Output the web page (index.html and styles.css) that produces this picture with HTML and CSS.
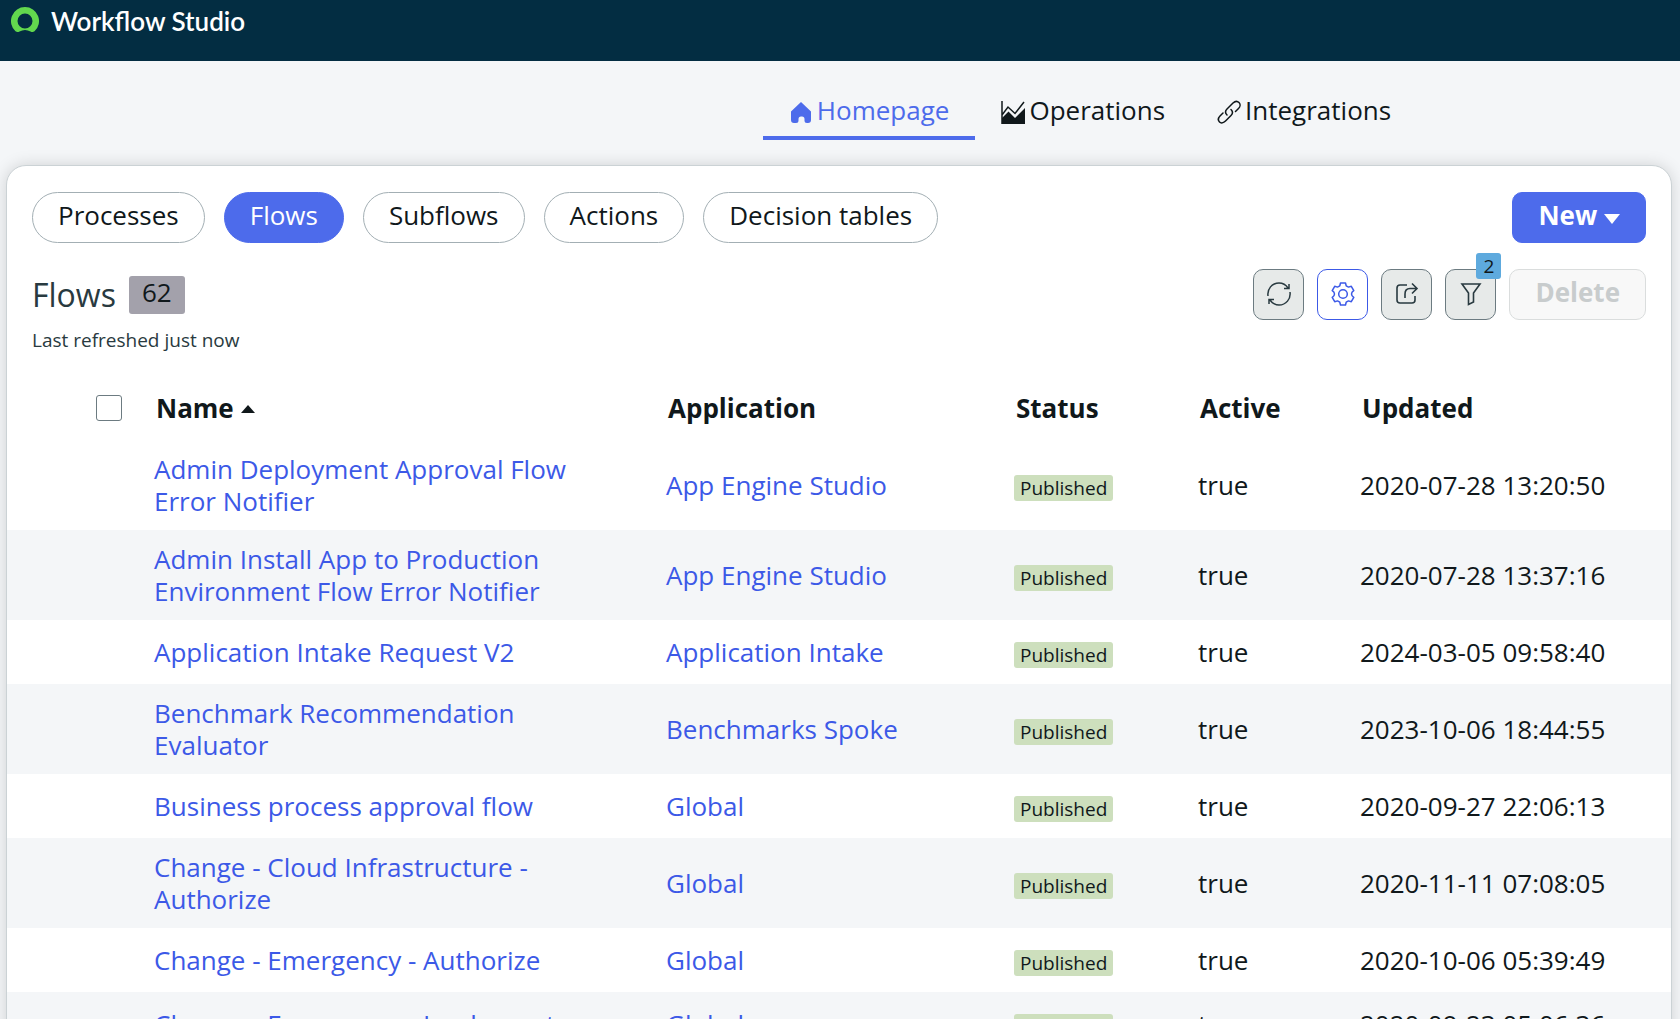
FILE: index.html
```html
<!DOCTYPE html>
<html lang="en">
<head>
  <meta charset="UTF-8" />
  <meta name="viewport" content="width=device-width, initial-scale=1" />
  <title>Workflow Studio</title>
  <link rel="stylesheet" href="styles.css">
</head>
<body>
  <header class="topbar">
    <svg class="logo" viewBox="0 0 28 26" aria-hidden="true">
      <path fill="#62d84e" fill-rule="evenodd" d="M14 0A14 14 0 0 0 4.500 24.300C5.700 25.400 7.300 25.300 8.500 24.500Q14 21.500 19.500 24.500C20.700 25.300 22.300 25.400 23.500 24.300A14 14 0 0 0 14 0ZM14 21.500A7.500 7.500 0 1 1 14 6.500A7.500 7.500 0 0 1 14 21.500Z"/>
    </svg>
    <span class="brand">Workflow Studio</span>
  </header>

  <nav class="tabs">
    <a class="tab active" href="#">
      <svg width="24" height="24" viewBox="0 0 24 24" aria-hidden="true">
        <path fill="currentColor" d="M12 2L22 11.500V20Q22 23 19 23H18Q15.500 23 15.500 20.500V19Q15.500 16.500 13 16.500H12Q9.500 16.500 9.500 19V20.500Q9.500 23 7 23H5Q2 23 2 20V11.500Z"/>
      </svg>
      <span>Homepage</span>
    </a>
    <a class="tab" href="#">
      <svg width="24" height="24" viewBox="0 0 24 24" aria-hidden="true">
        <path fill="currentColor" d="M1 18L7.500 11.500L14 18L24 8V24H1Z"/>
        <path fill="none" stroke="currentColor" stroke-width="1.500" d="M1 1V24M1 15L7 7L14 13.500L23 2"/>
      </svg>
      <span>Operations</span>
    </a>
    <a class="tab" href="#">
      <svg width="24" height="24" viewBox="0 0 24 24" aria-hidden="true">
        <g fill="none" stroke="currentColor" stroke-width="1.500" stroke-linecap="round">
          <path d="M10 15C8 13 8.500 10.500 10 9L16 3C18 1 20.500 1 22 2.500C23.500 4 23.500 6.500 21.500 8.500L18.500 11.500"/>
          <path d="M14 9.500C16 11.500 15.500 14 14 15.500L8.500 21C6.500 23 4 23.500 2.500 22C1 20.500 1 18 3 16L6 13"/>
        </g>
      </svg>
      <span>Integrations</span>
    </a>
  </nav>

  <main class="card">
    <div class="toolbar">
      <div class="pills">
        <button class="pill">Processes</button>
        <button class="pill selected">Flows</button>
        <button class="pill">Subflows</button>
        <button class="pill">Actions</button>
        <button class="pill">Decision tables</button>
      </div>
      <button class="btn primary">New
        <svg width="16" height="10" viewBox="0 0 16 10" aria-hidden="true"><path fill="currentColor" d="M0 0H16L8 10Z"/></svg>
      </button>
    </div>

    <div class="list-head">
      <div>
        <div class="list-title">
          <h1>Flows</h1>
          <span class="count">62</span>
        </div>
        <p class="refreshed">Last refreshed just now</p>
      </div>
      <div class="actions">
        <button class="icon-btn" aria-label="Refresh">
          <svg width="24" height="24" viewBox="0 0 24 24" aria-hidden="true">
            <g fill="none" stroke="currentColor" stroke-width="1.500">
              <path d="M1 14C0 7 5 1 12 1C16 1 19 3 21 6M22 2V6.500H17"/>
              <path d="M23 10C24 17 19 23 12 23C8 23 5 21 3 18M2 22V17.500H7"/>
            </g>
          </svg>
        </button>
        <button class="icon-btn outlined" aria-label="Settings">
          <svg width="24" height="24" viewBox="0 0 24 24" aria-hidden="true">
            <g fill="none" stroke="currentColor" stroke-width="1.500" stroke-linejoin="round">
              <path d="M9.500 1H14.500L15.200 3.800L17.500 5.100L20.300 4.300L22.800 8.600Q20.500 10 20.500 12Q20.500 14 22.800 15.400L20.300 19.700L17.500 18.900L15.200 20.200L14.500 23H9.500L8.800 20.200L6.500 18.900L3.700 19.700L1.200 15.400Q3.500 14 3.500 12Q3.500 10 1.200 8.600L3.700 4.300L6.500 5.100L8.800 3.800Z"/>
              <circle cx="12" cy="12" r="4.300"/>
            </g>
          </svg>
        </button>
        <button class="icon-btn" aria-label="Share">
          <svg width="24" height="24" viewBox="0 0 24 24" aria-hidden="true">
            <g fill="none" stroke="currentColor" stroke-width="1.600">
              <path d="M12 3H5Q2 3 2 6V18Q2 21 5 21H17Q20 21 20 18V14"/>
              <path d="M10 16V12Q10 6.500 15 6.500H22M17 1.500L22 6.500L17 11.500"/>
            </g>
          </svg>
        </button>
        <div class="filter">
          <button class="icon-btn" aria-label="Filter">
            <svg width="24" height="24" viewBox="0 0 24 24" aria-hidden="true">
              <path fill="none" stroke="currentColor" stroke-width="1.600" d="M3 2H21L14.500 11V20L9.500 22.500V11Z"/>
            </svg>
          </button>
          <span class="badge">2</span>
        </div>
        <button class="btn" disabled>Delete</button>
      </div>
    </div>

    <table class="flows">
      <colgroup>
        <col class="col-check"><col class="col-name"><col class="col-app"><col class="col-status"><col class="col-active"><col>
      </colgroup>
      <thead>
        <tr>
          <th class="check"><input type="checkbox" aria-label="Select all flows"></th>
          <th>Name <svg width="14" height="8" viewBox="0 0 14 8" aria-hidden="true"><path fill="currentColor" d="M0 8H14L7 0Z"/></svg></th>
          <th>Application</th>
          <th>Status</th>
          <th>Active</th>
          <th>Updated</th>
        </tr>
      </thead>
      <tbody>
        <tr>
          <td></td>
          <td><a href="#">Admin Deployment Approval Flow Error Notifier</a></td>
          <td><a href="#">App Engine Studio</a></td>
          <td><span class="status">Published</span></td>
          <td>true</td>
          <td>2020-07-28 13:20:50</td>
        </tr>
        <tr>
          <td></td>
          <td><a href="#">Admin Install App to Production Environment Flow Error Notifier</a></td>
          <td><a href="#">App Engine Studio</a></td>
          <td><span class="status">Published</span></td>
          <td>true</td>
          <td>2020-07-28 13:37:16</td>
        </tr>
        <tr>
          <td></td>
          <td><a href="#">Application Intake Request V2</a></td>
          <td><a href="#">Application Intake</a></td>
          <td><span class="status">Published</span></td>
          <td>true</td>
          <td>2024-03-05 09:58:40</td>
        </tr>
        <tr>
          <td></td>
          <td><a href="#">Benchmark Recommendation Evaluator</a></td>
          <td><a href="#">Benchmarks Spoke</a></td>
          <td><span class="status">Published</span></td>
          <td>true</td>
          <td>2023-10-06 18:44:55</td>
        </tr>
        <tr>
          <td></td>
          <td><a href="#">Business process approval flow</a></td>
          <td><a href="#">Global</a></td>
          <td><span class="status">Published</span></td>
          <td>true</td>
          <td>2020-09-27 22:06:13</td>
        </tr>
        <tr>
          <td></td>
          <td><a href="#">Change - Cloud Infrastructure - Authorize</a></td>
          <td><a href="#">Global</a></td>
          <td><span class="status">Published</span></td>
          <td>true</td>
          <td>2020-11-11 07:08:05</td>
        </tr>
        <tr>
          <td></td>
          <td><a href="#">Change - Emergency - Authorize</a></td>
          <td><a href="#">Global</a></td>
          <td><span class="status">Published</span></td>
          <td>true</td>
          <td>2020-10-06 05:39:49</td>
        </tr>
        <tr>
          <td></td>
          <td><a href="#">Change - Emergency - Implement</a></td>
          <td><a href="#">Global</a></td>
          <td><span class="status">Published</span></td>
          <td>true</td>
          <td>2020-09-23 05:06:36</td>
        </tr>
      </tbody>
    </table>
  </main>
</body>
</html>
```
FILE: styles.css
```css
:root {
  --blue: #4d6beb;
  --link: #3c59e7;
  --text: #10181b;
  --muted: #293a40;
  --bg: #f4f6f8;
}

* {
  box-sizing: border-box;
}

body {
  margin: 0;
  height: 100vh;
  overflow: hidden;
  background: var(--bg);
  color: var(--text);
  font-family: "Open Sans", "Noto Sans", sans-serif;
  font-size: 26px;
  line-height: 32px;
}

button {
  font-family: inherit;
  font-size: inherit;
  line-height: inherit;
  cursor: pointer;
}

a {
  color: var(--link);
  text-decoration: none;
}

/* Top bar */
.topbar {
  display: flex;
  align-items: flex-start;
  gap: 12px;
  height: 61px;
  padding: 7px 11px;
  background: #032d42;
  color: #fff;
}

.logo {
  width: 28px;
  height: 26px;
}

.brand {
  font-family: Lato, sans-serif;
  font-size: 26px;
  font-weight: 600;
  line-height: 28px;
}

/* Tabs */
.tabs {
  display: flex;
  justify-content: center;
  height: 79px;
  padding-left: 500px;
}

.tab {
  display: flex;
  align-items: center;
  gap: 4px;
  height: 79px;
  padding: 22px 26px 0;
  color: var(--text);
  border-bottom: 4px solid transparent;
}

.tab svg {
  margin-top: 4px;
}

.tab.active {
  color: var(--blue);
  border-color: var(--blue);
}

/* Card */
.card {
  margin: 25px 8px 0 6px;
  padding-top: 26px;
  min-height: 100vh;
  background: #fff;
  border: 1px solid #cbd2d5;
  border-radius: 20px;
  box-shadow: 0 0 16px rgba(0, 0, 0, 0.15);
}

.toolbar,
.list-head {
  display: flex;
  justify-content: space-between;
  padding: 0 25px;
}

.pills {
  display: flex;
  gap: 19px;
}

.pill {
  height: 51px;
  padding: 0 25px 6px;
  background: #fff;
  color: var(--text);
  border: 1px solid #a3afb4;
  border-radius: 26px;
}

.pill.selected {
  background: var(--blue);
  border-color: var(--blue);
  color: #fff;
}

.btn {
  height: 51px;
  padding: 0 25px 6px;
  border: 1px solid #dadddd;
  border-radius: 10px;
  background: #f8f8f8;
  font-weight: 700;
}

.btn.primary {
  background: var(--blue);
  border-color: var(--blue);
  color: #fff;
}

.btn svg {
  vertical-align: 1px;
}

.btn:disabled {
  color: #c8cccd;
  cursor: default;
}

.list-head {
  padding-top: 26px;
}

.list-title {
  display: flex;
  align-items: center;
  gap: 13px;
  height: 51px;
}

.list-title h1 {
  margin: 0;
  color: var(--muted);
  font-size: 32px;
  font-weight: 400;
}

.count {
  height: 38px;
  padding: 0 13px;
  background: #a3a1ab;
  border-radius: 3px;
}

.refreshed {
  margin: 4px 0 0;
  color: var(--muted);
  font-size: 19px;
}

.actions {
  display: flex;
  gap: 13px;
}

.icon-btn {
  display: flex;
  align-items: center;
  justify-content: center;
  width: 51px;
  height: 51px;
  padding: 0 0 2px;
  background: #e7eae9;
  color: var(--muted);
  border: 1px solid #6c7b81;
  border-radius: 10px;
}

.icon-btn.outlined {
  background: #fff;
  color: var(--link);
  border-color: var(--link);
}

.filter {
  position: relative;
}

.badge {
  position: absolute;
  top: -16px;
  right: -5px;
  width: 25px;
  height: 26px;
  background: #5eaade;
  border-radius: 3px;
  font-size: 19px;
  line-height: 26px;
  text-align: center;
}

/* Flow list */
.flows {
  width: 100%;
  margin-top: 20px;
  border-collapse: collapse;
  table-layout: fixed;
}

.col-check {
  width: 137px;
}

.col-name {
  width: 512px;
}

.col-app {
  width: 348px;
}

.col-status {
  width: 184px;
}

.col-active {
  width: 162px;
}

.flows th {
  height: 64px;
  padding: 0 0 0 12px;
  text-align: left;
}

.flows th svg {
  vertical-align: 5px;
}

.flows th.check {
  padding-left: 89px;
}

.flows input {
  display: block;
  appearance: none;
  width: 26px;
  height: 26px;
  margin: 0;
  background: #fff;
  border: 1px solid #6c7b81;
  border-radius: 3px;
}

.flows td {
  height: 64px;
  padding: 13px 80px 13px 10px;
}

.flows td + td + td {
  padding-right: 0;
}

.flows tbody tr:nth-child(even) {
  background: var(--bg);
}

.status {
  display: inline-block;
  padding: 0 6px;
  background: #cddfbd;
  border-radius: 3px;
  font-size: 19px;
  line-height: 26px;
}
```
